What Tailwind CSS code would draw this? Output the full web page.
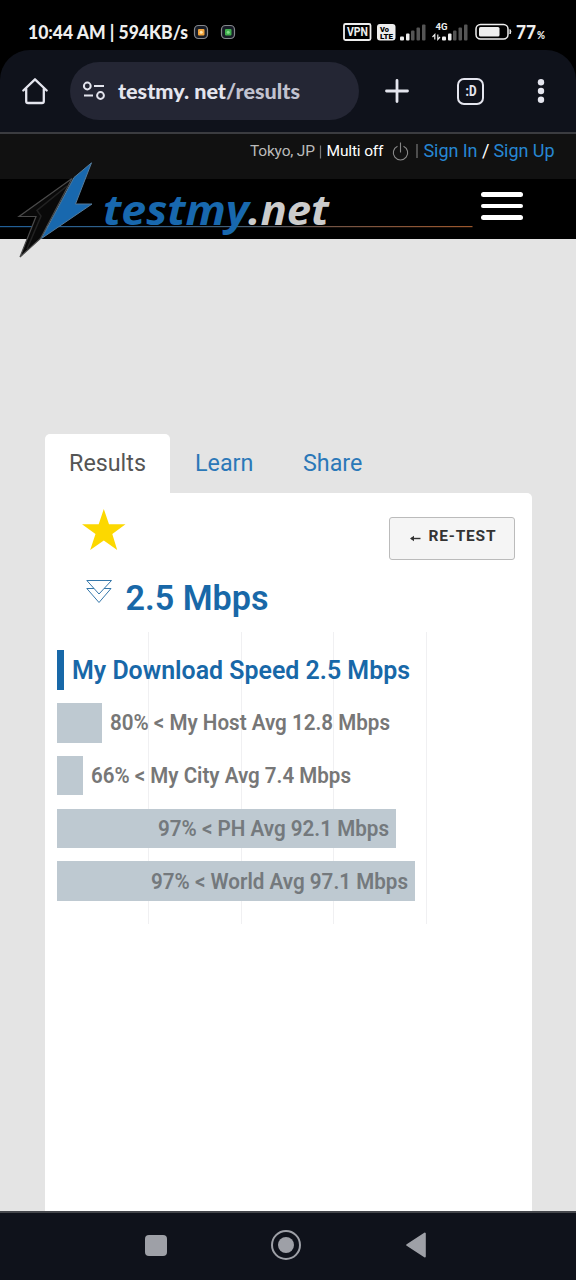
<!DOCTYPE html>
<html lang="en">
<head>
<meta charset="utf-8">
<meta name="viewport" content="width=device-width">
<title>testmy.net results</title>
<script src="https://cdn.jsdelivr.net/npm/@tailwindcss/browser@4"></script>
</head>
<body class="flex h-[1280px] w-[576px] flex-col overflow-hidden bg-black font-['Roboto',sans-serif]">
<!-- Status bar -->
<div class="h-[50px] shrink-0">
<svg class="block" width="576" height="50" fill="#eee">
  <g font-family="Lato, sans-serif" font-weight="900" font-size="19">
    <text x="28" y="39" textLength="160" lengthAdjust="spacingAndGlyphs">10:44 AM | 594KB/s</text>
  </g>
  <g stroke="#85878c" stroke-width="1.2">
    <rect x="194.500" y="25.500" width="13" height="13" rx="4" fill="#171c26"/>
    <rect x="221.500" y="25.500" width="13" height="13" rx="4" fill="#171c26"/>
  </g>
  <rect x="198" y="29" width="6.500" height="6.500" rx="1" fill="#f1a33c"/><circle cx="201.200" cy="32.200" r="1.500" fill="#ffe6b0"/>
  <rect x="225" y="29" width="6.500" height="6.500" rx="1" fill="#3fae4d"/><circle cx="228.200" cy="32.200" r="1.500" fill="#82dc88"/>
  <rect x="344" y="24" width="26.500" height="16" rx="1.500" fill="none" stroke="#eee" stroke-width="1.800"/>
  <text x="347" y="36.300" font-family="Roboto, sans-serif" font-weight="700" font-size="12" textLength="21" lengthAdjust="spacingAndGlyphs">VPN</text>
  <rect x="377" y="24" width="18.500" height="16.500" rx="3"/>
  <g fill="#000" font-family="Roboto, sans-serif" font-weight="900" font-size="8">
    <text x="380" y="31.700" textLength="9" lengthAdjust="spacingAndGlyphs">Vo</text>
    <text x="380" y="38.500" textLength="13" lengthAdjust="spacingAndGlyphs">LTE</text>
  </g>
  <g><rect x="400" y="36.500" width="4" height="4" rx="1"/><rect x="406" y="33.500" width="3.500" height="7" rx="1"/></g>
  <g fill="#555"><rect x="411" y="30.500" width="3.500" height="10" rx="1"/><rect x="416.500" y="27.500" width="3.500" height="13" rx="1"/><rect x="422" y="24.500" width="3.500" height="16" rx="1"/></g>
  <text x="435.500" y="30" font-family="Roboto, sans-serif" font-weight="700" font-size="9.500" textLength="12" lengthAdjust="spacingAndGlyphs">4G</text>
  <path d="M434.800 39.500V34.500L432.500 37M437.800 34.500V39.500L440 37" fill="none" stroke="#eee" stroke-width="1.200"/>
  <g><rect x="442" y="36.500" width="4" height="4" rx="1"/><rect x="448" y="33.500" width="3.500" height="7" rx="1"/></g>
  <g fill="#555"><rect x="453" y="30.500" width="3.500" height="10" rx="1"/><rect x="458.500" y="27.500" width="3.500" height="13" rx="1"/><rect x="464" y="24.500" width="3.500" height="16" rx="1"/></g>
  <rect x="476" y="24.500" width="32" height="14.500" rx="4.500" fill="none" stroke="#eee" stroke-width="1.500"/>
  <rect x="479" y="27" width="20.500" height="9.500" rx="1.500"/>
  <path d="M510 29.500q1.800 2.200 0 4.500z" stroke="#eee"/>
  <text x="516" y="38.500" font-family="Lato, sans-serif" font-weight="900" font-size="19" textLength="20" lengthAdjust="spacingAndGlyphs">77</text>
  <text x="537" y="38.500" font-family="Lato, sans-serif" font-weight="900" font-size="10.500" textLength="8" lengthAdjust="spacingAndGlyphs">%</text>
</svg>
</div>
<!-- Browser toolbar -->
<div class="flex h-[82px] shrink-0 items-center rounded-t-[30px] bg-[#0f121b]">
  <svg class="ml-5 h-[30px] w-[30px]" viewBox="20 76 30 30" fill="none" stroke="#e4e5ee" stroke-width="2.300" stroke-linejoin="round" stroke-linecap="round"><path d="M23.300 90.500L35 79.300L46.700 90.500M26.200 88.500V101.200q0 1.800 1.800 1.800H42q1.800 0 1.800-1.800V88.500"/></svg>
  <div class="ml-5 flex h-[58px] w-[289px] items-center rounded-full bg-[#242634]">
    <svg width="289" height="58" viewBox="70 62 289 58">
      <g fill="none" stroke="#e4e5ee" stroke-width="2"><circle cx="87.300" cy="86" r="3.400"/><path d="M94 86h10M84 95.500h9"/><circle cx="100.500" cy="95.500" r="3.400"/></g>
      <text x="118" y="98.500" font-family="Lato, sans-serif" font-size="21.500" font-weight="900" fill="#e4e5ee" textLength="182" lengthAdjust="spacingAndGlyphs">testmy. net<tspan fill="#c1c2cf">/results</tspan></text>
    </svg>
  </div>
  <svg class="ml-[26px]" width="24" height="24" fill="none" stroke="#e4e5ee" stroke-width="2.800" stroke-linecap="round"><path d="M12 1.500v21M1.500 12h21"/></svg>
  <div class="ml-12 flex h-[27px] w-[27px] items-center justify-center rounded-[7px] border-[2.5px] border-[#e4e5ee]"><svg class="shrink-0 overflow-visible" width="16" height="20"><text x="2.500" y="14.500" font-family="Roboto, sans-serif" font-weight="800" font-size="14" fill="#e4e5ee" textLength="11" lengthAdjust="spacingAndGlyphs">:D</text></svg></div>
  <svg class="ml-[52px]" width="10" height="28" fill="#e4e5ee"><circle cx="5" cy="5.200" r="3.200"/><circle cx="5" cy="14" r="3.200"/><circle cx="5" cy="22.800" r="3.200"/></svg>
</div>
<!-- Site header -->
<div class="relative h-[107px] shrink-0 border-t-2 border-[#3b3c40] bg-black">
  <div class="flex h-[45px] justify-end bg-[#111] pt-[5px] pr-[22px]">
    <svg width="308" height="28" viewBox="246 139 308 28" class="overflow-visible" font-family="Roboto, sans-serif" fill="#bbb">
      <text x="250" y="156.300" font-size="15.500" textLength="65">Tokyo, JP</text>
      <path d="M320.500 145.500v13M417 144v14" stroke="#777" stroke-width="1.200"/>
      <text x="326.500" y="156.300" font-size="15.500" fill="#fff" textLength="57">Multi off</text>
      <path d="M397.500 146.200a7.200 7.200 0 1 0 6 0M400.500 142.500v10" fill="none" stroke="#888" stroke-width="1.100"/>
      <g font-size="18" fill="#2787d3"><text x="423.500" y="156.600" textLength="54">Sign In</text><text x="482" y="156.600" fill="#fff">/</text><text x="493.500" y="156.600" textLength="61">Sign Up</text></g>
    </svg>
  </div>
  <!-- Logo overlaps the header's lower edge -->
  <svg class="absolute top-0 left-0 z-10" width="576" height="130" viewBox="0 134 576 130">
    <defs><linearGradient id="rule" gradientUnits="userSpaceOnUse" x1="0" y1="0" x2="472" y2="0"><stop offset="0" stop-color="#205f98"/><stop offset=".5" stop-color="#426078"/><stop offset=".7" stop-color="#735344"/><stop offset="1" stop-color="#9c572c"/></linearGradient></defs>
    <rect x="0" y="226" width="472.500" height="1.200" fill="url(#rule)"/>
    <path d="M72 178.500L19 216.500H36L20 257L40.500 238.500Z" fill="#090909" stroke="#4a4a4a" stroke-width="1.200"/>
    <path d="M67 186L37 210.500L41 216L27 249" fill="none" stroke="#222" stroke-width="1.500"/>
    <path d="M91.500 162.800L74 177.500L41.500 238.500L92 204H75.500Z" fill="#1868ae" stroke="#567b99" stroke-width="1"/>
    <g font-family="Open Sans, sans-serif" font-style="italic" font-weight="700" font-size="42">
      <text x="103" y="225" fill="#1868ae" textLength="146" lengthAdjust="spacingAndGlyphs">testmy</text>
      <text x="248" y="225" fill="#ccc" textLength="81" lengthAdjust="spacingAndGlyphs">.net</text>
    </g>
  </svg>
  <div class="mt-[13px] ml-[481px] flex w-[42px] flex-col gap-[7.2px]"><i class="h-[4.500px] rounded-full bg-white"></i><i class="h-[4.500px] rounded-full bg-white"></i><i class="h-[4.500px] rounded-full bg-white"></i></div>
</div>
<!-- Results page -->
<main class="flex h-[972px] shrink-0 flex-col bg-[#e4e4e4] px-[45px] pt-[195px]">
  <nav class="flex h-[59px] text-[23.300px] leading-[59px] text-[#2b78b8]">
    <div class="w-[125px] rounded-t-[5px] bg-white text-center text-[#555]">Results</div>
    <div class="ml-[25px] w-[108px]">Learn</div><div>Share</div>
  </nav>
  <section class="flex w-[487px] flex-1 flex-col rounded-tr-[5px] bg-white">
    <div class="flex h-[77px] shrink-0 items-start justify-between pr-[17px] pl-[37px]">
      <svg class="mt-4" width="44" height="43" viewBox="0 0 44 43" fill="#fcd800"><path d="M21.800 0L27 15.300H43.500L30.300 25.100L35.200 41L21.800 31.400L8.200 41L13.500 25.100L0 15.300H16.700Z"/></svg>
      <button class="mt-6 flex h-[43px] w-[126px] items-center justify-center rounded-[3px] border border-[#bbb] bg-[#f5f5f5] pb-[5px]">
        <svg width="90" height="20" fill="#333"><path d="M4 12.500h9.500" stroke="#333" stroke-width="1.400"/><path d="M3 12.500l4-2.700v5.400z"/><text x="21.500" y="15.400" font-family="Roboto, sans-serif" font-size="15.500" font-weight="700" textLength="67">RE-TEST</text></svg>
      </button>
    </div>
    <div class="flex h-[62px] shrink-0 pl-[41px]">
      <svg class="mt-[9px]" width="27" height="26" fill="none" stroke="#3577aa" stroke-width="1"><path d="M.8 1.500H25.500L13 15ZM8 9.500H.8L13 23.500L25 9.500H18"/></svg>
      <svg class="ml-3 overflow-visible" width="146" height="50"><text x="0.500" y="40" font-family="Roboto, sans-serif" font-weight="600" font-size="35" fill="#1868a8" textLength="143" lengthAdjust="spacingAndGlyphs">2.5 Mbps</text></svg>
    </div>
    <div class="ml-3 flex h-[292px] w-[370px] flex-col gap-[13.300px] bg-[linear-gradient(to_right,transparent_91px,#f0f0f2_91px,#f0f0f2_92px,transparent_92px,transparent_184px,#f0f0f2_184px,#f0f0f2_185px,transparent_185px,transparent_276px,#f0f0f2_276px,#f0f0f2_277px,transparent_277px,transparent_369px,#f0f0f2_369px)] pt-[18.300px]">
      <div class="flex h-[39.500px] items-center gap-[7.500px]"><div class="h-full w-[7.400px] bg-[#1868a8]"></div><svg class="overflow-visible" width="340" height="39"><text x="0" y="27.700" font-family="Roboto, sans-serif" font-size="25" font-weight="600" fill="#1868a8" textLength="338" lengthAdjust="spacingAndGlyphs">My Download Speed 2.5 Mbps</text></svg></div>
      <div class="flex h-[39.500px] items-center gap-[7.500px]"><div class="h-full w-[45.400px] bg-[#bec9d1]"></div><svg class="overflow-visible" width="282" height="39"><text x="0" y="27" font-family="Roboto, sans-serif" font-size="21.500" font-weight="600" fill="#777" textLength="280" lengthAdjust="spacingAndGlyphs">80% &lt; My Host Avg 12.8 Mbps</text></svg></div>
      <div class="flex h-[39.500px] items-center gap-[7.500px]"><div class="h-full w-[26.400px] bg-[#bec9d1]"></div><svg class="overflow-visible" width="262" height="39"><text x="0" y="27" font-family="Roboto, sans-serif" font-size="21.500" font-weight="600" fill="#777" textLength="260" lengthAdjust="spacingAndGlyphs">66% &lt; My City Avg 7.4 Mbps</text></svg></div>
      <div class="flex h-[39.500px] w-[339px] items-center justify-end bg-[#bec9d1] pr-[7px]"><svg class="overflow-visible" width="231" height="39"><text x="0" y="27" font-family="Roboto, sans-serif" font-size="21.500" font-weight="600" fill="#74797d" textLength="231" lengthAdjust="spacingAndGlyphs">97% &lt; PH Avg 92.1 Mbps</text></svg></div>
      <div class="flex h-[39.500px] w-[358px] items-center justify-end bg-[#bec9d1] pr-[7px]"><svg class="overflow-visible" width="257" height="39"><text x="0" y="27" font-family="Roboto, sans-serif" font-size="21.500" font-weight="600" fill="#74797d" textLength="257" lengthAdjust="spacingAndGlyphs">97% &lt; World Avg 97.1 Mbps</text></svg></div>
    </div>
  </section>
</main>
<!-- System navigation -->
<footer class="flex h-[69px] shrink-0 items-center border-t-2 border-[#45474c] bg-[#0f121b] pb-[3px] pl-[145px]">
  <div class="h-[21px] w-[22px] rounded-[4px] bg-[#9ea0a7]"></div>
  <div class="ml-[104px] flex h-[30px] w-[30px] items-center justify-center rounded-full border-[2.5px] border-[#9ea0a7]"><div class="h-[16px] w-[16px] rounded-full bg-[#9ea0a7]"></div></div>
  <svg class="ml-[105px]" width="20" height="26" fill="#9ea0a7" stroke="#9ea0a7" stroke-width="2" stroke-linejoin="round"><path d="M1.200 13L18.800 1.500V24.500Z"/></svg>
</footer>
</body>
</html>
